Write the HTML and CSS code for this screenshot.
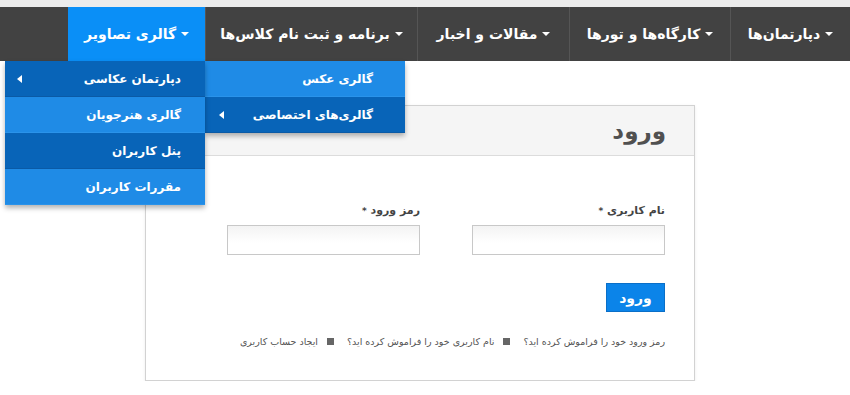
FILE: index.html
```html
<!DOCTYPE html>
<html lang="fa" dir="rtl">

<head>
    <meta charset="UTF-8">
    <meta name="viewport" content="width=device-width, initial-scale=1.0">
    <title>ورود</title>
    <link rel="stylesheet" href="styles.css">
</head>

<body>
    <div class="top-strip"></div>

    <nav class="navbar">
        <ul class="menu">
            <li class="menu-item" style="width: 120px"><span class="caret"></span>دپارتمان‌ها</li>
            <li class="menu-item" style="width: 161px"><span class="caret"></span>کارگاه‌ها و تورها</li>
            <li class="menu-item" style="width: 152px"><span class="caret"></span>مقالات و اخبار</li>
            <li class="menu-item" style="width: 212px"><span class="caret"></span>برنامه و ثبت نام کلاس‌ها</li>
            <li class="menu-item active" style="width: 137px"><span class="caret"></span>گالری تصاویر
                <ul class="dropdown dropdown-main">
                    <li class="drop-item">گالری عکس</li>
                    <li class="drop-item dark"><span class="arrow"></span>گالری‌های اختصاصی</li>
                </ul>
                <ul class="dropdown dropdown-sub">
                    <li class="drop-item dark"><span class="arrow"></span>دپارتمان عکاسی</li>
                    <li class="drop-item">گالری هنرجویان</li>
                    <li class="drop-item dark">پنل کاربران</li>
                    <li class="drop-item">مقررات کاربران</li>
                </ul>
            </li>
        </ul>
    </nav>

    <div class="page">
        <div class="panel">
            <div class="panel-heading">ورود</div>
            <div class="panel-body">
                <div class="fields">
                    <div class="field">
                        <label>نام کاربری <span class="star">*</span></label>
                        <input type="text">
                    </div>
                    <div class="field">
                        <label>رمز ورود <span class="star">*</span></label>
                        <input type="password">
                    </div>
                </div>
                <button class="btn">ورود</button>
                <ul class="links">
                    <li>رمز ورود خود را فراموش کرده اید؟</li>
                    <li><span class="bullet"></span>نام کاربری خود را فراموش کرده اید؟</li>
                    <li><span class="bullet"></span>ایجاد حساب کاربری</li>
                </ul>
            </div>
        </div>
    </div>
</body>

</html>
```

FILE: styles.css
```css
body {
    font-family: "DejaVu Sans", sans-serif;
    margin: 0;
    background-color: white;
    color: #333;
}

ul {
    list-style: none;
    margin: 0;
    padding: 0;
}

.top-strip {
    height: 7px;
    background-color: #ececec;
}

.navbar {
    background-color: #424242;
    height: 54px;
}

.menu {
    display: flex;
    height: 100%;
}

.menu-item {
    position: relative;
    display: flex;
    align-items: center;
    justify-content: center;
    gap: 5px;
    box-sizing: border-box;
    border-left: 1px solid #555;
    color: white;
    font-size: 14px;
    font-weight: bold;
}

.menu-item.active {
    background-color: #0a8ff7;
    border-left: none;
}

.caret {
    width: 0;
    height: 0;
    border-left: 4px solid transparent;
    border-right: 4px solid transparent;
    border-top: 4px solid white;
}

.dropdown {
    position: absolute;
    top: 100%;
    width: 200px;
    box-shadow: 0 3px 5px rgba(0, 0, 0, 0.3);
    z-index: 5;
}

.dropdown-main {
    left: 100%;
}

.dropdown-sub {
    right: 0;
}

.drop-item {
    display: flex;
    align-items: center;
    height: 36px;
    background-color: #1f8be6;
    border-bottom: 1px solid #2a93ea;
    box-sizing: border-box;
    font-size: 12px;
    font-weight: bold;
    color: white;
    padding-right: 24px;
}

.dropdown-main .drop-item {
    padding-right: 32px;
}

.drop-item.dark {
    background-color: #0864b8;
    border-bottom-color: #0a5aa6;
}

.arrow {
    order: 2;
    margin-right: auto;
    margin-left: 12px;
    width: 0;
    height: 0;
    border-top: 4px solid transparent;
    border-bottom: 4px solid transparent;
    border-right: 5px solid white;
}

.dropdown-main .arrow {
    margin-left: 14px;
}

.page {
    padding-top: 44px;
}

.panel {
    width: 550px;
    margin-left: 145px;
    margin-right: auto;
    box-sizing: border-box;
    border: 1px solid #d2d2d2;
    box-shadow: 0 1px 3px rgba(0, 0, 0, 0.08);
    height: 276px;
}

.panel-heading {
    height: 50px;
    box-sizing: border-box;
    background-color: #f5f5f5;
    border-bottom: 1px solid #dcdcdc;
    padding-right: 28px;
    display: flex;
    align-items: center;
    font-size: 23px;
    font-weight: bold;
    color: #505050;
}

.panel-body {
    padding: 48px 29px 0 29px;
}

.fields {
    display: flex;
    gap: 52px;
}

.field {
    display: flex;
    flex-direction: column;
    gap: 8px;
    width: 193px;
}

.field label {
    font-size: 11px;
    font-weight: bold;
    color: #444;
}

.star {
    font-size: 9px;
    color: #444;
}

.field input {
    height: 30px;
    box-sizing: border-box;
    border: 1px solid #c8c8c8;
    background: linear-gradient(#f3f3f3, white 60%);
    margin: 0;
}

.btn {
    display: block;
    margin-top: 28px;
    width: 59px;
    height: 29px;
    border: 1px solid #0a6fc8;
    background-color: #0b84e9;
    color: white;
    font-family: inherit;
    font-size: 14px;
    font-weight: bold;
}

.links {
    display: flex;
    gap: 13px;
    margin-top: 24px;
    font-size: 9.5px;
    color: #555;
}

.links li {
    display: flex;
    align-items: center;
    gap: 9px;
}

.bullet {
    width: 7px;
    height: 7px;
    background-color: #666;
}
```
